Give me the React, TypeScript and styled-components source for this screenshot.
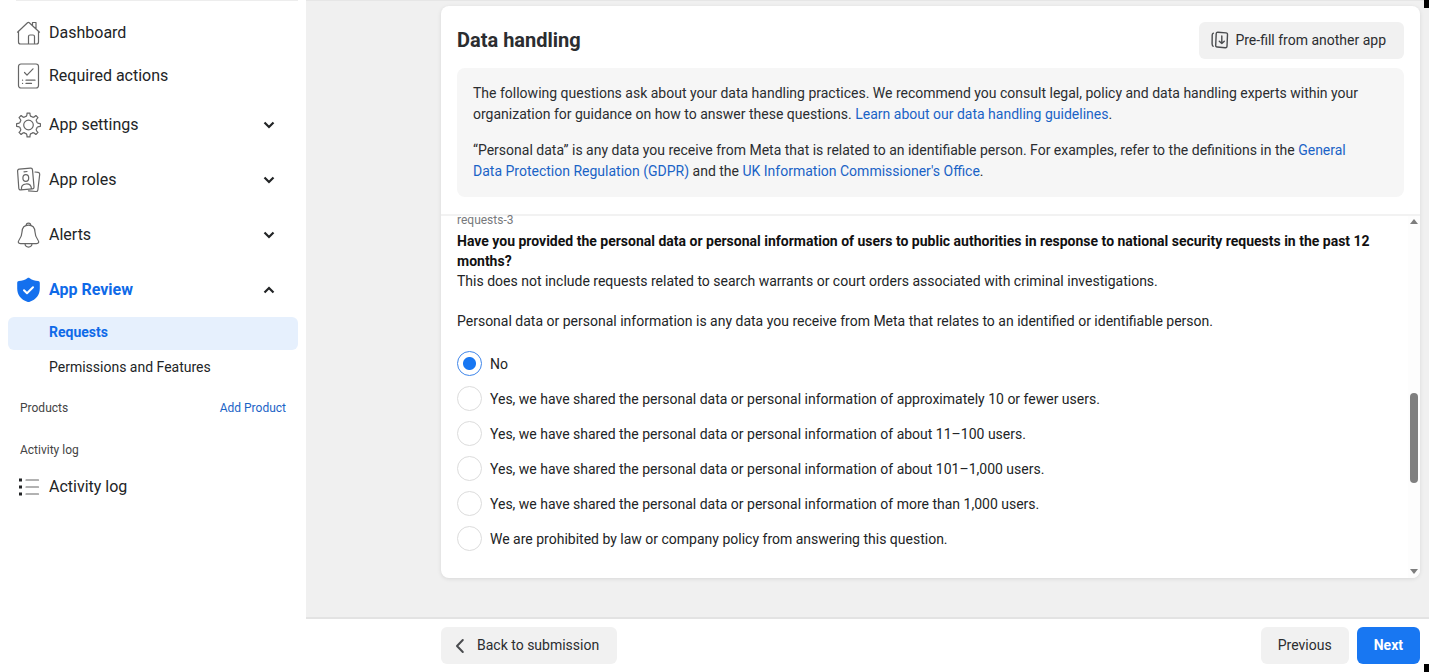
import React, { useState } from "react";
import styled, { createGlobalStyle } from "styled-components";

const GlobalStyle = createGlobalStyle`
  * { box-sizing: border-box; }
  body {
    margin: 0;
    background: #fff;
    color: #222426;
    font-family: Roboto, "Liberation Sans", sans-serif;
    font-size: 14px;
    line-height: 20px;
  }
  h1, h2, p, fieldset { margin: 0; padding: 0; border: 0; }
  a { color: #1a63c6; text-decoration: none; }
  button { font: inherit; color: inherit; border: 0; cursor: pointer; }
`;

const Shell = styled.div`
  position: relative;
  display: flex;
  min-height: 100vh;
`;

const Sidebar = styled.nav`
  flex: 0 0 306px;
  padding: 0 8px;
`;

const TopRule = styled.div`
  height: 1px;
  margin-left: 8px;
  background: #ededed;
`;

const NavItem = styled.button<{ $height: number; $active?: boolean }>`
  display: flex;
  align-items: center;
  gap: 8px;
  width: 100%;
  height: ${(p) => p.$height}px;
  padding: 0 21px 0 8px;
  background: none;
  font-size: 16px;
  text-align: left;
  color: ${(p) => (p.$active ? "#0f6ae8" : "#222426")};
  font-weight: ${(p) => (p.$active ? 700 : 400)};
`;

const NavText = styled.span`
  flex: 1;
`;

const NavIcon = styled.svg`
  width: 25px;
  height: 26px;
  flex: none;
  fill: none;
  stroke: #666;
  stroke-width: 1.2;
  stroke-linecap: round;
  stroke-linejoin: round;
`;

const Chevron = styled.svg`
  width: 16px;
  height: 16px;
  fill: none;
  stroke: #222426;
  stroke-width: 2.2;
`;

const SubNav = styled.div`
  display: flex;
  flex-direction: column;
  gap: 2px;
  padding: 9px 0 2px;
`;

const SubItem = styled.a<{ $active?: boolean }>`
  padding: 5px 0 8px 41px;
  border-radius: 6px;
  background: ${(p) => (p.$active ? "#e6f0fd" : "transparent")};
  color: ${(p) => (p.$active ? "#0f6ae8" : "#222426")};
  font-weight: ${(p) => (p.$active ? 700 : 400)};
`;

const SectionRow = styled.div`
  display: flex;
  justify-content: space-between;
  height: 42px;
  align-items: center;
  padding: 0 12px;
  font-size: 12px;
  color: #444;
`;

const Main = styled.main`
  flex: 1;
  min-width: 0;
  display: flex;
  flex-direction: column;
  background: #f0f0f0;
`;

const Stage = styled.div`
  flex: 1;
  display: flex;
  padding: 5px 9px 39px 135px;
  border-top: 1px solid #e6e6e6;
`;

const Card = styled.section`
  flex: 1;
  min-width: 0;
  display: flex;
  flex-direction: column;
  background: #fff;
  border-radius: 8px;
  box-shadow: 0 1px 4px rgba(0, 0, 0, 0.1);
`;

const CardHead = styled.header`
  padding: 16px 16px 17px;
  border-bottom: 2px solid #f2f2f2;
`;

const TitleRow = styled.div`
  display: flex;
  justify-content: space-between;
  margin-bottom: 9px;
`;

const Title = styled.h1`
  font-size: 20px;
  line-height: 36px;
  font-weight: 700;
  color: #2b2d30;
`;

const Button = styled.button<{ $primary?: boolean; $withIcon?: boolean }>`
  display: flex;
  align-items: center;
  gap: 6px;
  height: 37px;
  padding: ${(p) => (p.$withIcon ? "0 18px 2px 12px" : "0 17px 2px")};
  border-radius: 6px;
  background: ${(p) => (p.$primary ? "#1877f2" : "#f1f1f1")};
  color: ${(p) => (p.$primary ? "#fff" : "#2b2d30")};
  font-weight: ${(p) => (p.$primary ? 700 : 400)};
`;

const ButtonIcon = styled.svg`
  width: 18px;
  height: 18px;
  fill: none;
  stroke: #4a4c4f;
  stroke-linecap: round;
  stroke-linejoin: round;
`;

const Info = styled.div`
  display: flex;
  flex-direction: column;
  gap: 15px;
  padding: 15px 40px 15px 16px;
  border-radius: 8px;
  background: #f6f6f6;
  color: #2b2d30;
  line-height: 21px;
`;

const Scroller = styled.div`
  flex: 1;
  display: flex;
`;

const Question = styled.div`
  flex: 1;
  padding: 0 8px 0 16px;
`;

const Tag = styled.div`
  font-size: 12px;
  line-height: 8px;
  color: #77797c;
  margin-bottom: 7px;
`;

const QuestionTitle = styled.h2`
  font-size: 14px;
  line-height: 20px;
  font-weight: 700;
  color: #111;
`;

const Para = styled.p`
  margin-bottom: 20px;
`;

const Options = styled.fieldset`
  display: flex;
  flex-direction: column;
  gap: 10px;
`;

const Option = styled.label`
  display: flex;
  align-items: center;
  gap: 8px;
`;

const Radio = styled.input`
  appearance: none;
  flex: none;
  width: 25px;
  height: 25px;
  margin: 0;
  border: 1px solid #dcdcdc;
  border-radius: 50%;
  background: #fff;
  &:checked {
    border-color: #3f86ea;
    background: radial-gradient(circle, #1877f2 6px, #fff 7px);
  }
`;

const Scrollbar = styled.div`
  flex: 0 0 12px;
  display: flex;
  flex-direction: column;
  align-items: center;
  padding: 3px 0 4px;
  background: #fdfdfd;
  border-radius: 0 0 8px 0;
`;

const Arrow = styled.svg`
  width: 8px;
  height: 5px;
  fill: #7d7d7d;
`;

const Thumb = styled.div`
  width: 8px;
  height: 90px;
  border-radius: 4px;
  background: #7f7f7f;
`;

const Space = styled.div<{ $grow: number }>`
  flex: ${(p) => p.$grow};
`;

const Footer = styled.footer`
  display: flex;
  align-items: center;
  gap: 8px;
  height: 55px;
  padding: 0 9px 0 135px;
  border-top: 2px solid #e3e3e3;
  background: #fff;
`;

const Corner = styled.div<{ $bottom?: boolean }>`
  position: absolute;
  right: 0;
  ${(p) => (p.$bottom ? "bottom: 0;" : "top: 0;")}
  width: 5px;
  height: 8px;
  background: #000;
`;

const HomeIcon = () => (
  <NavIcon viewBox="0 0 25 26" aria-hidden="true">
    <path d="M1.500 12.200 11.500 2.800c.6-.5 1.200-.5 1.800 0L23.500 12.200M2.500 11.500V22c0 1.300.7 2 2 2h16c1.300 0 2-.7 2-2V11.500M16.500 5.200V2.500H20v6.200M12.500 24v-7.500c0-1 .4-1.500 1.500-1.500h3c1 0 1.500.5 1.500 1.500V24" />
  </NavIcon>
);

const ChecklistIcon = () => (
  <NavIcon viewBox="0 0 25 26" aria-hidden="true">
    <rect x="2.500" y="1" width="20" height="24" rx="2.500" />
    <path d="m8.500 9.500 2.500 2.700L17 5.800M6.500 17.200h.1M10 17.200h9M6.500 20.400h.1M10 20.400h5.500" />
  </NavIcon>
);

const gearPath = () => {
  const at = (deg: number, r: number) => {
    const a = (deg * Math.PI) / 180;
    return `${(12.5 + r * Math.cos(a)).toFixed(2)} ${(13 + r * Math.sin(a)).toFixed(2)}`;
  };
  let d = `M${at(-7, 12)}`;
  for (let i = 0; i < 8; i++) {
    const c = i * 45;
    d += `L${at(c + 7, 12)}Q${at(c + 10, 8.2)} ${at(c + 22.5, 9)}Q${at(c + 35, 8.2)} ${at(c + 38, 12)}`;
  }
  return `${d}Z`;
};

const GearIcon = () => (
  <NavIcon viewBox="0 0 25 26" aria-hidden="true">
    <path d={gearPath()} />
    <circle cx="12.500" cy="13" r="4.800" />
  </NavIcon>
);

const RolesIcon = () => (
  <NavIcon viewBox="0 0 25 26" aria-hidden="true">
    <path d="M3.200 2.200 14.500 1.200c1.200-.1 1.900.5 2 1.700l1.500 17c.1 1.200-.5 1.900-1.700 2L4.800 22.900c-1.200.1-1.900-.5-2-1.700L1.600 4.200c-.1-1.200.4-1.900 1.600-2zM8 4.800l3-.3M5.500 22.500c-.4-3.500 1-5.200 4.500-5.500 3.500-.3 5.100 1.200 5.500 4.700M19 5l3.200.4c1.100.2 1.700.8 1.500 2l-1.800 15.400c-.2 1.200-.8 1.800-2 1.700l-7.400-.7" />
    <ellipse cx="9.800" cy="11" rx="2.900" ry="3.300" />
  </NavIcon>
);

const BellIcon = () => (
  <NavIcon viewBox="0 0 25 26" aria-hidden="true">
    <path d="M12.500 3.200c-4 0-6.300 2.800-6.500 6.800-.2 4.500-1.200 5.800-2.900 8-1.500 2-.9 3.600 1.400 3.600h16c2.300 0 2.900-1.600 1.400-3.600-1.700-2.200-2.700-3.500-2.900-8-.2-4-2.500-6.800-6.500-6.800zM10.200 3.600c0-3.400 4.600-3.400 4.600 0M9 21.800c.3 4.300 6.700 4.300 7 0" />
  </NavIcon>
);

const ShieldIcon = () => (
  <NavIcon viewBox="0 0 25 26" aria-hidden="true">
    <path fill="#1470ee" stroke="none" d="M11.300 1.200c.8-.5 1.600-.5 2.400 0 2.600 1.700 5.300 2.600 8.400 2.900 1.100.1 1.700.8 1.700 1.900v5.500c0 6.500-3.800 11-10 13.300-.9.300-1.700.3-2.600 0C5 22.500 1.200 18 1.200 11.500V6c0-1.100.6-1.800 1.700-1.900 3.100-.3 5.800-1.200 8.400-2.900z" />
    <path stroke="#fff" strokeWidth="2" d="m8 13.200 3 3 6-6" />
  </NavIcon>
);

const ListIcon = () => (
  <NavIcon viewBox="0 0 25 26" aria-hidden="true">
    <path d="M10 6h12.500M10 13h12.500M10 20h12.500" />
    <path fill="#222426" stroke="none" d="M3 4.500h3v3H3zM3 11.500h3v3H3zM3 18.500h3v3H3z" />
  </NavIcon>
);

const Caret = ({ up }: { up?: boolean }) => (
  <Chevron viewBox="0 0 16 16" aria-hidden="true">
    <path d={up ? "m3.500 10.500 4.500-4.500 4.500 4.500" : "m3.500 5.500 4.500 4.500 4.500-4.500"} />
  </Chevron>
);

const PrefillIcon = () => (
  <ButtonIcon viewBox="0 0 18 18" strokeWidth="1.400" aria-hidden="true">
    <path d="M6.900 1.200 15 1.900c1.100.1 1.600.7 1.500 1.700l-.5 11.600c-.1 1.100-.7 1.600-1.700 1.500L6.200 16c-1.100-.1-1.600-.7-1.500-1.700l.5-11.600c.1-1.100.7-1.600 1.700-1.500zM2.400 2.200c-.8.300-1.200.8-1.200 1.800l-.1 8.800c0 1.200.3 1.900 1 2.500M10.800 5v7.500M8.300 10.200l2.500 2.400 2.500-2.400" />
  </ButtonIcon>
);

const BackIcon = () => (
  <ButtonIcon viewBox="0 0 18 18" strokeWidth="2" aria-hidden="true">
    <path d="M9.800 4 4 10l5.800 6" />
  </ButtonIcon>
);

const OPTIONS = [
  "No",
  "Yes, we have shared the personal data or personal information of approximately 10 or fewer users.",
  "Yes, we have shared the personal data or personal information of about 11–100 users.",
  "Yes, we have shared the personal data or personal information of about 101–1,000 users.",
  "Yes, we have shared the personal data or personal information of more than 1,000 users.",
  "We are prohibited by law or company policy from answering this question.",
];

export default function App() {
  const [answer, setAnswer] = useState(0);
  return (
    <>
      <GlobalStyle />
      <Shell>
        <Sidebar>
          <TopRule />
          <NavItem $height={63}><HomeIcon /><NavText>Dashboard</NavText></NavItem>
          <NavItem $height={24}><ChecklistIcon /><NavText>Required actions</NavText></NavItem>
          <NavItem $height={74}><GearIcon /><NavText>App settings</NavText><Caret /></NavItem>
          <NavItem $height={35}><RolesIcon /><NavText>App roles</NavText><Caret /></NavItem>
          <NavItem $height={75}><BellIcon /><NavText>Alerts</NavText><Caret /></NavItem>
          <NavItem $height={36} $active><ShieldIcon /><NavText>App Review</NavText><Caret up /></NavItem>
          <SubNav>
            <SubItem href="#requests" $active>Requests</SubItem>
            <SubItem href="#permissions">Permissions and Features</SubItem>
          </SubNav>
          <SectionRow><span>Products</span><a href="#add">Add Product</a></SectionRow>
          <SectionRow><span>Activity log</span></SectionRow>
          <NavItem $height={32}><ListIcon /><NavText>Activity log</NavText></NavItem>
        </Sidebar>
        <Main>
          <Stage>
            <Card>
              <CardHead>
                <TitleRow>
                  <Title>Data handling</Title>
                  <Button $withIcon>
                    <PrefillIcon />
                    Pre-fill from another app
                  </Button>
                </TitleRow>
                <Info>
                  <p>
                    The following questions ask about your data handling practices. We recommend you consult legal,
                    policy and data handling experts within your organization for guidance on how to answer these
                    questions. <a href="#guidelines">Learn about our data handling guidelines</a>.
                  </p>
                  <p>
                    “Personal data” is any data you receive from Meta that is related to an identifiable person. For
                    examples, refer to the definitions in the{" "}
                    <a href="#gdpr">General Data Protection Regulation (GDPR)</a> and the{" "}
                    <a href="#ico">UK Information Commissioner's Office</a>.
                  </p>
                </Info>
              </CardHead>
              <Scroller>
                <Question>
                  <Tag>requests-3</Tag>
                  <QuestionTitle>
                    Have you provided the personal data or personal information of users to public authorities in
                    response to national security requests in the past 12 months?
                  </QuestionTitle>
                  <Para>
                    This does not include requests related to search warrants or court orders associated with criminal
                    investigations.
                  </Para>
                  <Para>
                    Personal data or personal information is any data you receive from Meta that relates to an
                    identified or identifiable person.
                  </Para>
                  <Options>
                    {OPTIONS.map((text, i) => (
                      <Option key={text}>
                        <Radio type="radio" name="answer" checked={answer === i} onChange={() => setAnswer(i)} />
                        {text}
                      </Option>
                    ))}
                  </Options>
                </Question>
                <Scrollbar>
                  <Arrow viewBox="0 0 8 5"><path d="M0 5 4 0l4 5z" /></Arrow>
                  <Space $grow={168} />
                  <Thumb />
                  <Space $grow={86} />
                  <Arrow viewBox="0 0 8 5"><path d="M0 0h8L4 5z" /></Arrow>
                </Scrollbar>
              </Scroller>
            </Card>
          </Stage>
          <Footer>
            <Button $withIcon>
              <BackIcon />
              Back to submission
            </Button>
            <Space $grow={1} />
            <Button>Previous</Button>
            <Button $primary>Next</Button>
          </Footer>
        </Main>
        <Corner />
        <Corner $bottom />
      </Shell>
    </>
  );
}
